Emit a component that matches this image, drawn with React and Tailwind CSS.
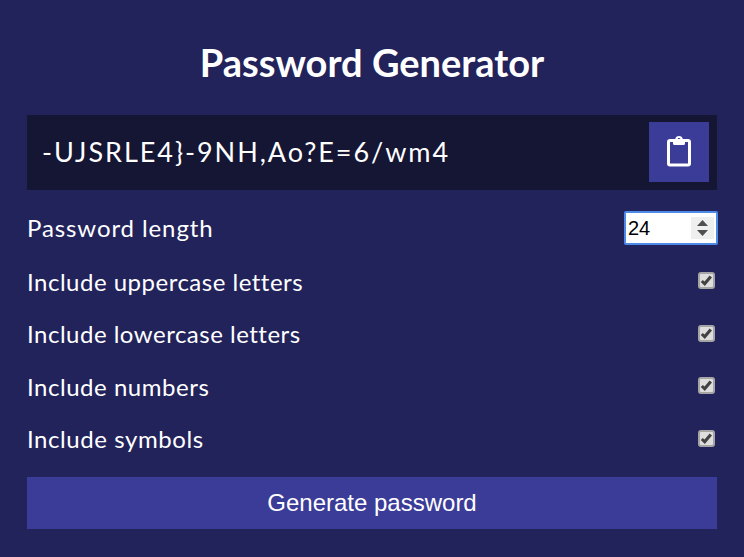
const rows = [
  { text: 'Include uppercase letters', height: 'h-[53px]', line: 'leading-[36px] tracking-[0.5px]' },
  { text: 'Include lowercase letters', height: 'h-[52px]', line: 'leading-[34px] tracking-[0.5px]' },
  { text: 'Include numbers', height: 'h-[53px]', line: 'leading-[36px] tracking-[0.53px]' },
  { text: 'Include symbols', height: 'h-[52px]', line: 'leading-[34px] tracking-[0.57px]' },
];

function ClipboardIcon() {
  return (
    <svg className="mb-[2px] h-[32px] w-[24px]" viewBox="0 0 24 32" fill="none" aria-hidden="true">
      <rect x="1.5" y="5.5" width="21" height="24.5" rx="1.5" stroke="#fff" strokeWidth="3" />
      <path
        fill="#fff"
        fillRule="evenodd"
        d="M6 4h2.200a3.900 3.900 0 0 1 7.600 0H18v4.500a1.500 1.500 0 0 1-1.500 1.500h-9A1.500 1.500 0 0 1 6 8.500zM12 3a1.400 1.400 0 1 0 0 2.800A1.400 1.400 0 0 0 12 3z"
      />
    </svg>
  );
}

function Checkbox() {
  return (
    <span
      role="checkbox"
      aria-checked="true"
      className="mr-[2px] flex size-[17px] items-center justify-center rounded-[3px] border-2 border-[#a5a5a5] bg-[#dedede]"
    >
      <svg className="size-[13px]" viewBox="0 0 13 13" fill="none" aria-hidden="true">
        <path d="M1.800 7 4.700 9.800 10.800 2.500" stroke="#424242" strokeWidth="3.100" />
      </svg>
    </span>
  );
}

export default function App() {
  return (
    <main className="h-[557px] w-[744px] overflow-hidden bg-[#23235b] px-[27px] pt-[34px] font-['Lato',sans-serif] text-white">
      <h1 className="h-[81px] text-center text-[38px] leading-[57px] font-bold">Password Generator</h1>
      <div className="flex h-[75px] items-start justify-between bg-[#151534] pt-[7px] pr-2 pl-[15px]">
        <span className="text-[27px] leading-[60px] tracking-[1.96px]">{'-UJSRLE4}-9NH,Ao?E=6/wm4'}</span>
        <button aria-label="Copy" className="flex size-[60px] items-center justify-center bg-[#3b3b98]">
          <ClipboardIcon />
        </button>
      </div>
      <div className="mt-[21px] -mr-px flex h-[53px] items-start justify-between">
        <span className="text-[24px] leading-[33px] tracking-[0.9px]">Password length</span>
        <div className="flex h-[34px] w-[94px] items-center justify-between rounded-[2px] border-2 border-[#4d8ae8] bg-white pr-[2px] pl-[2px] font-['Liberation_Sans',sans-serif] text-[20px] text-black">
          <span>24</span>
          <svg className="h-[22px] w-[23px] bg-[#efefef]" viewBox="0 0 23 22" aria-hidden="true">
            <path d="M6 9 11.500 3 17 9zM6 13h11l-5.500 6z" fill="#505050" />
          </svg>
        </div>
      </div>
      <div>
        {rows.map(({ text, height, line }) => (
          <div key={text} className={`flex items-start justify-between ${height}`}>
            <span className={`text-[24px] ${line}`}>{text}</span>
            <span className="pt-[8px]">
              <Checkbox />
            </span>
          </div>
        ))}
      </div>
      <button className="mt-[3px] block h-[52px] w-full bg-[#3b3b98] font-['Liberation_Sans',sans-serif] text-[24px]">
        Generate password
      </button>
    </main>
  );
}
